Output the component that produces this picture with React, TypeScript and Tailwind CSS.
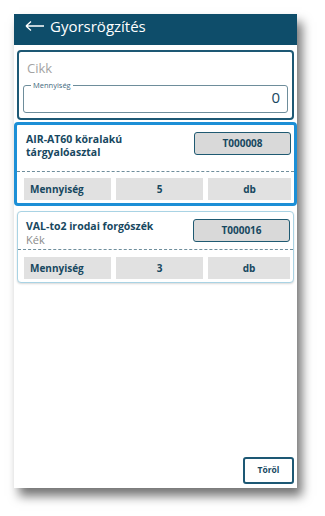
import React from "react";

type Row = {
  id: string;
  name: string;
  sub?: string;
  code: string;
  qty: number;
  unit: string;
  selected?: boolean;
};

const rows: Row[] = [
  { id: "1", name: "AIR-AT60 köralakú tárgyalóasztal", code: "T000008", qty: 5, unit: "db", selected: true },
  { id: "2", name: "VAL-to2 irodai forgószék", sub: "Kék", code: "T000016", qty: 3, unit: "db" },
];

function ItemCard({ row }: { row: Row }) {
  const outer = row.selected
    ? "mt-[2px] rounded-[4px] border-[3px] border-[#1c8fd6] bg-white"
    : "mx-[3px] mt-[5px] rounded-[4px] border border-[#a9d3e4] bg-white shadow-[0_1px_2px_rgba(0,0,0,0.15)]";
  return (
    <div className={outer}>
      <div className={row.selected ? "flex pl-[9px] pr-[3px] pt-[7px]" : "flex pl-[8px] pr-[3px] pt-[7px]"}>
        <div className="flex-1 pr-2">
          <div className="mt-[1px] text-[10.5px] font-bold leading-[13px] text-[#17485f]">{row.name}</div>
          {row.sub && <div className="text-[11px] leading-[14px] text-[#8a8a8a]">{row.sub}</div>}
        </div>
        <div className="flex h-[23px] w-[97px] items-center justify-center rounded-[3px] border-[1.5px] border-[#1f5a72] bg-[#d9d9d9] text-[10px] font-bold text-[#17485f]">
          {row.code}
        </div>
      </div>
      <div className={row.selected ? "mt-[12px] border-t border-dashed border-[#6f8e9c]" : "mt-[2px] border-t border-dashed border-[#6f8e9c]"} />
      <div className={row.selected ? "flex gap-[5px] pb-[3px] pl-[7px] pr-[3px] pt-[6px]" : "flex gap-[5px] pb-[3px] pl-[6px] pr-[3px] pt-[7px]"}>
        <div className="flex h-[22px] w-[87px] items-center bg-[#e1e1e1] pl-[6px] text-[10px] font-bold text-[#17485f]">
          Mennyiség
        </div>
        <div className="flex h-[22px] w-[87px] items-center justify-center bg-[#e1e1e1] text-[10px] font-bold text-[#17485f]">
          {row.qty}
        </div>
        <div className="flex h-[22px] flex-1 items-center justify-center bg-[#e1e1e1] text-[10px] font-bold text-[#17485f]">
          {row.unit}
        </div>
      </div>
    </div>
  );
}

export default function App() {
  return (
    <div className="h-[516px] w-[325px] bg-white pl-[14px] pt-[14px]" style={{ fontFamily: '"Open Sans", "Liberation Sans", sans-serif' }}>
      <div className="flex h-[474px] w-[283px] flex-col bg-white shadow-[5px_8px_10px_rgba(0,0,0,0.55)]">
        <div className="flex h-[31px] items-start bg-[#0e4d6a] pl-[11px] pt-[1px] text-white">
          <svg width="20" height="20" viewBox="0 0 20 20" className="mt-[1px]">
            <path d="M1 10 H19 M1 10 L6 5.5 M1 10 L6 14.5" stroke="white" strokeWidth="1.3" fill="none" />
          </svg>
          <span className="ml-[5px] text-[15px] leading-[22px]">Gyorsrögzítés</span>
        </div>

        <div className="mx-[3px] mt-[5px] rounded-[4px] border-2 border-[#1d5874] bg-white px-[4px] pb-[5px]">
          <div className="pl-[4px] pt-[8px] text-[13px] leading-[16px] text-[#a3a3a3]">Cikk</div>
          <fieldset className="mt-[5px] h-[32px] rounded-[3px] border border-[#6e8d9b] px-[7px]">
            <legend className="px-[2px] text-[7.5px] leading-[8px] text-[#3f6a7e]">Mennyiség</legend>
            <div className="-mt-[1px] text-right text-[15px] leading-[18px] text-[#17485f]">0</div>
          </fieldset>
        </div>

        {rows.map((r) => (
          <ItemCard key={r.id} row={r} />
        ))}

        <div className="flex-1" />
        <div className="flex justify-end pb-[4px] pr-[3px]">
          <div className="flex h-[27px] w-[51px] items-center justify-center rounded-[3px] border-2 border-[#1d5874] text-[8.5px] font-bold text-[#17485f]">
            Töröl
          </div>
        </div>
      </div>
    </div>
  );
}
